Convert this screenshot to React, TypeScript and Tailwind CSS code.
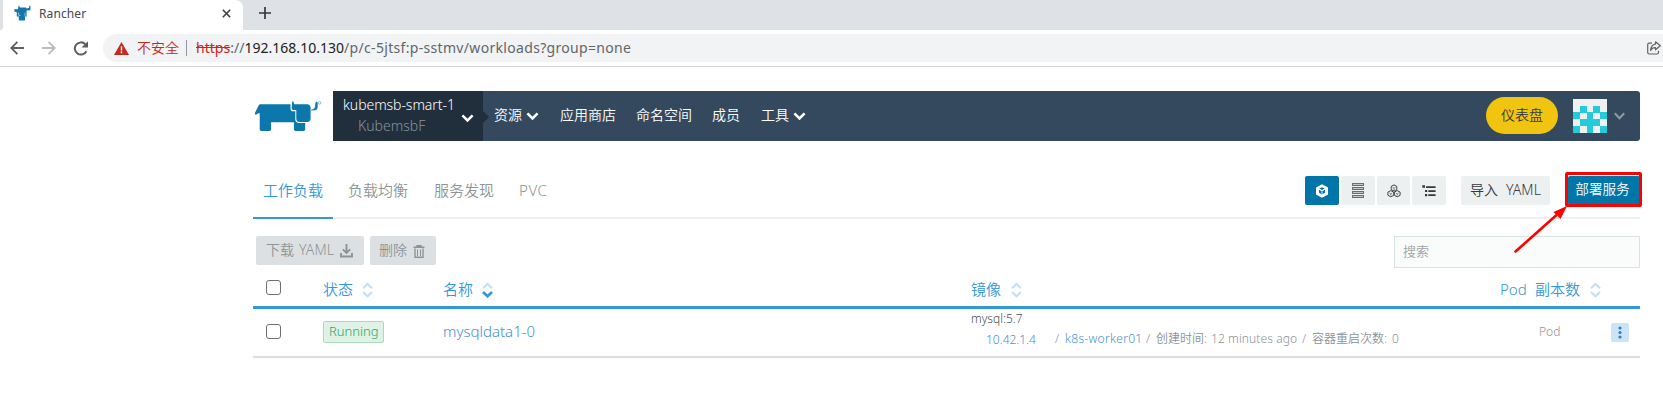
import React from "react";

function Chevron({ className = "" }: { className?: string }) {
  return (
    <svg className={`h-[9px] w-[13px] shrink-0 ${className}`} viewBox="0 0 13 9" fill="none" stroke="currentColor">
      <path d="M1.4 1.4 6.5 6.5 11.6 1.4" strokeWidth="2.5" />
    </svg>
  );
}

function SortIcon({ active = false }: { active?: boolean }) {
  return (
    <svg className="mt-px h-[16px] w-[11px] shrink-0" viewBox="0 0 11 16" fill="none" strokeWidth="2.1">
      <path d="M1 6.3 5.5 2 10 6.3" stroke="#c3e0f5" />
      <path d="M1 10 5.5 14.3 10 10" stroke={active ? "#3497da" : "#c3e0f5"} strokeWidth={active ? 2.6 : 2.1} />
    </svg>
  );
}

function BullLogo() {
  return (
    <svg className="h-[32px] w-[68px] shrink-0" viewBox="0 0 68 32">
      <g fill="#0b77aa">
        <path d="M6.2 4.2H36.5V8.4Q36.6 11.2 38.6 11.2H41.3V19.6Q41.5 22.8 44.7 23H51.2V29.6Q51 31 49.6 31H41.5Q40 31 39.9 29.6V22.3H17V29.6Q16.9 31 15.5 31H7.2Q5.8 31 5.7 29.6V13.3H4.3L1.9 14.8Q.4 14.6 1 12.8L4.8 5.2Q5.4 4.2 6.2 4.2Z" />
        <path d="M38.2 1.6Q39.4.8 39.6 2.2L40.2 4.2H53.2Q56.4 4.4 56.6 7.5V19Q56.2 21.8 53.2 21.9H45.2Q42.6 21.8 42.3 19.2V10H39.2Q37.6 9.8 37.7 8.2Z" />
        <path d="M57.4 9.9Q61 9.9 61.3 6.8L61.8 2.4Q62.6 1.5 63.3 2.4V7.4Q63 10 60.8 10.1H57.4Z" stroke="#0b77aa" strokeWidth=".6" />
      </g>
      <circle cx="65.6" cy="2.9" r="1.3" fill="none" stroke="#6eaecd" strokeWidth=".8" />
    </svg>
  );
}

function Favicon() {
  return (
    <svg className="h-[17px] w-[17px] shrink-0" viewBox="0 0 17 17" fill="#1277aa">
      <path d="M.2 4.2H4L4.6.3 6 2.5H11.8L12.5 3.6 14.8 3.1 15.6.4 16.4.6V5.2L12.6 5.6V11.4H11V15.4H4.8V11.4H2.8V7.3L.6 6.7Z" />
      <path d="M4.6 7.3V10.4H6.6M11 7.6V11.4" fill="none" stroke="#fff" strokeWidth=".5" />
    </svg>
  );
}

function BrowserTabs() {
  return (
    <div className="flex h-[30px] bg-[#dee1e6]">
      <div className="flex w-[3px] bg-white">
        <div className="w-[3px] rounded-br-lg bg-[#dee1e6]" />
      </div>
      <div className="flex w-[240px] items-start rounded-tr-lg bg-white pl-[11px]">
        <div className="flex h-[26px] w-[25px] items-center pt-px">
          <Favicon />
        </div>
        <span className="h-[26px] w-[183px] font-[Noto_Sans] text-[12px] leading-[27px] tracking-[0.1px] text-[#45484c]">Rancher</span>
        <svg className="mt-[9px] h-[9px] w-[9px]" viewBox="0 0 9 9" stroke="#3c4043" strokeWidth="1.6">
          <path d="M.8.8 8.2 8.2M8.2.8.8 8.2" />
        </svg>
      </div>
      <svg className="ml-[16px] mt-[7px] h-[12px] w-[12px]" viewBox="0 0 12 12" stroke="#35383b" strokeWidth="1.7">
        <path d="M6 0V12M0 6H12" />
      </svg>
    </div>
  );
}

function AddressBar() {
  return (
    <div className="flex h-[37px] items-start border-b border-[#d3d5d8] bg-white pt-[4px]">
      <div className="flex h-[28px] w-[103px] items-center pl-[10px]">
        <svg className="h-[14px] w-[14px]" viewBox="0 0 14 14" fill="none" stroke="#5a5e63" strokeWidth="1.8">
          <path d="M14 7H1.6M7.4.9 1.3 7 7.4 13.1" />
        </svg>
        <svg className="ml-[18px] h-[14px] w-[14px]" viewBox="0 0 14 14" fill="none" stroke="#b9bbbe" strokeWidth="1.8">
          <path d="M0 7H12.4M6.6.9 12.7 7 6.6 13.1" />
        </svg>
        <svg className="ml-[17px] h-[15px] w-[16px]" viewBox="0 0 16 15" fill="none" stroke="#5a5e63" strokeWidth="2">
          <path d="M13.4 10.2A6.1 6.1 0 1 1 12.3 3.2" />
          <path d="M15 .2V6.6H8.6Z" fill="#5a5e63" stroke="none" />
        </svg>
      </div>
      <div className="flex h-[28px] flex-1 items-center rounded-l-full bg-[#f1f3f4] pl-[11px] font-[Noto_Sans,'Noto_Sans_CJK_SC',sans-serif] text-[14px]">
        <svg className="h-[13px] w-[15px]" viewBox="0 0 15 13">
          <path d="M7.5 0 15 13H0Z" fill="#c5281c" />
          <path d="M7.5 4.2V8.4M7.5 9.6V11.2" stroke="#fff" strokeWidth="1.5" />
        </svg>
        <span className="-mt-[2px] ml-[8px] w-[48px] whitespace-nowrap font-[350] text-[#c5281c]">不安全</span>
        <span className="ml-px h-[16px] w-px bg-[#94979b]" />
        <span className="-mt-[2px] ml-[9px] whitespace-nowrap tracking-[0.32px] text-[#62666b]">
          <span className="tracking-[0.02px]">
            <span className="text-[#c5281c] line-through">https</span>://<span className="text-[#202124]">192.168.10.130</span>
          </span>
          /p/c-5jtsf:p-sstmv/workloads?group=none
        </span>
        <svg className="ml-auto mr-[2px] h-[14px] w-[14px]" viewBox="0 0 14 14" fill="none" stroke="#5f6368" strokeWidth="1.2">
          <path d="M5 2.2H2.2Q.7 2.2.7 3.7V11.5Q.7 13 2.2 13H10Q11.5 13 11.5 11.5V9.8" />
          <path d="M8.5.8 13.3 4.8 8.5 8.8V6.6Q5.2 6.4 3.6 9.4 4 3.8 8.5 3.1Z" strokeLinejoin="round" />
        </svg>
      </div>
    </div>
  );
}

function Avatar() {
  return (
    <svg className="h-[34px] w-[34px] shrink-0 bg-[#f0f0f0]" viewBox="0 0 34 34" fill="#26cbd9" shapeRendering="crispEdges">
      <path d="M7 7H14V14H7ZM20 7H27V14H20ZM0 13H7V20H0ZM14 13H20V20H14ZM27 13H34V20H27ZM7 20H27V27H7ZM0 27H7V34H0ZM14 27H20V34H14ZM27 27H34V34H27Z" />
    </svg>
  );
}

function NavBar() {
  return (
    <header className="flex h-[50px] w-[1387px]">
      <div className="flex w-[80px] items-start pl-px pt-[9px]">
        <BullLogo />
      </div>
      <nav className="flex w-[1307px] rounded-r-[3px] bg-[#34495e] text-[14px] text-white">
        <div className="flex h-[50px] w-[150px] items-center bg-[#212f3d]">
          <div className="flex w-[128px] flex-col pl-[10px]">
            <span className="-mt-[2px] h-[21px] whitespace-nowrap leading-[21px] tracking-[-0.06px]">kubemsb-smart-1</span>
            <span className="h-[21px] pl-[15px] leading-[21px] text-[#8a939b]">KubemsbF</span>
          </div>
          <Chevron className="mt-[4px]" />
        </div>
        <svg className="mt-[20px] h-[12px] w-[6px]" viewBox="0 0 6 12" fill="#212f3d">
          <path d="M0 0 6 6 0 12Z" />
        </svg>
        <div className="flex h-[46px] flex-1 items-center whitespace-nowrap">
          <span className="w-[32px] pl-[5px]">资源</span>
          <Chevron className="ml-[5px] mt-[4px]" />
          <span className="ml-[21px] w-[76px]">应用商店</span>
          <span className="w-[76px]">命名空间</span>
          <span className="w-[49px]">成员</span>
          <span className="w-[32px]">工具</span>
          <Chevron className="mt-[4px]" />
          <button className="ml-auto mt-[3px] h-[37px] w-[72px] rounded-[19px] bg-[#f1c40f] pb-[3px] text-[#34393e]">仪表盘</button>
          <span className="ml-[15px] mt-[4px]">
            <Avatar />
          </span>
          <svg className="ml-[7px] mr-[15px] mt-[3px] h-[8px] w-[11px]" viewBox="0 0 11 8" fill="none" stroke="#8f9ba6" strokeWidth="2">
            <path d="M.8 1.2 5.5 6.2 10.2 1.2" />
          </svg>
        </div>
      </nav>
    </header>
  );
}

const iconButton = "flex h-[29px] items-center justify-center rounded-[2px] bg-[#ecf0f1]";

function Tabs() {
  return (
    <div className="mt-[27px] flex h-[51px] w-[1387px] border-b-2 border-[#ecf0f1] text-[15px]">
      <div className="h-[51px] w-[80px] whitespace-nowrap border-b-2 border-[#3497da] pl-[10px] pt-[11px] leading-[22px] text-[#3497da]">工作负载</div>
      <div className="w-[86px] pl-[15px] pt-[11px] leading-[22px] text-[#8b9596]">负载均衡</div>
      <div className="w-[86px] pl-[15px] pt-[11px] leading-[22px] text-[#8b9596]">服务发现</div>
      <div className="pl-[14px] pt-[11px] leading-[22px] tracking-[0.6px] text-[#8b9596]">PVC</div>
      <div className="ml-auto mt-[8px] flex h-[29px] text-[14px] text-[#34393e]">
        <div className={`${iconButton} w-[34px] bg-[#0075a8]!`}>
          <svg className="mt-px h-[14px] w-[14px]" viewBox="0 0 14 14">
            <path d="M7 .2 13 3.6V10.4L7 13.8 1 10.4V3.6Z" fill="#fff" />
            <path d="M4 5.4 7 6.9 10 5.4V8.7L7 10.4 4 8.7Z" fill="#0075a8" />
            <path d="M4.2 4.6 7 3.2 9.8 4.6 7 6Z" fill="#0075a8" />
            <path d="M4 5.2 7 6.8 10 5.2M7 6.8V10.6" fill="none" stroke="#fff" strokeWidth=".9" />
          </svg>
        </div>
        <div className={`${iconButton} ml-[2px] w-[34px]`}>
          <svg className="h-[15px] w-[12px]" viewBox="0 0 12 15" shapeRendering="crispEdges">
            <path d="M0 0H12V3H0ZM0 4H12V7H0ZM0 8H12V11H0ZM0 12H12V15H0Z" fill="#6b6d6f" />
            <path d="M1 1H11V2H1ZM1 5H11V6H1ZM1 9H11V10H1ZM1 13H11V14H1Z" fill="#c2c5c6" />
          </svg>
        </div>
        <div className={`${iconButton} ml-[2px] w-[33px]`}>
          <svg className="h-[14px] w-[14px]" viewBox="0 0 14 14" fill="none" stroke="#414548" strokeWidth="1">
            <path d="M7 .9 9.8 2.4V5.6L7 7.1 4.2 5.6V2.4ZM3.8 6.6 6.7 8.1V11.3L3.8 12.8.9 11.3V8.1ZM10.2 6.6 13.1 8.1V11.3L10.2 12.8 7.3 11.3V8.1Z" />
            <path d="M5.5 3.3 7 4.2 8.5 3.3M7 4.2V6M2.3 9 3.8 9.9 5.3 9M3.8 9.9V11.6M8.7 9 10.2 9.9 11.7 9M10.2 9.9V11.6" strokeWidth=".6" />
          </svg>
        </div>
        <div className={`${iconButton} ml-[2px] w-[34px]`}>
          <svg className="h-[12px] w-[14px]" viewBox="0 0 14 12" fill="#35393c">
            <path d="M.3.3H3V2.7H.3ZM4 1.2H13.6V3H4ZM3 5H5.2V7H3ZM6.3 5.2H13.6V6.9H6.3ZM3 9.1H5.2V11.2H3ZM6.3 9.3H13.6V11H6.3Z" />
          </svg>
        </div>
        <button className={`${iconButton} ml-[15px] w-[89px] gap-[8px] whitespace-nowrap pb-[2px]`}>
          <span>导入</span>
          <span className="tracking-[0.15px]">YAML</span>
        </button>
        <div className="relative ml-[18px] h-[29px] w-[72px]">
          <button className="h-[29px] w-[72px] whitespace-nowrap rounded-[2px] bg-[#0075a8] pb-[2px] pr-[3px] text-[13.6px] text-white">部署服务</button>
          <div className="absolute -left-[3px] -top-[4px] h-[35px] w-[77px] rounded-[2px] border-[3px] border-[#ff0000]" />
          <svg className="absolute -left-[54px] top-[29px] h-[50px] w-[56px]" viewBox="0 0 56 50">
            <path d="M1.5 46.5 42 10.5" stroke="#ff0000" strokeWidth="2.6" strokeLinecap="round" />
            <path d="M53 1 46.5 14 43 10.5 39.5 7Z" fill="#ff0000" />
          </svg>
        </div>
      </div>
    </div>
  );
}

function ActionRow() {
  return (
    <div className="mt-[16px] flex h-[33px] w-[1387px] pl-[3px] text-[14px] text-[#8b9596]">
      <div className="mt-px flex h-[29px] w-[108px] items-center whitespace-nowrap rounded-[2px] bg-[#dce0e3] pb-[2px] pl-[10px]">
        <span className="w-[33px]">下载</span>
        <span className="w-[41px] tracking-[0.15px]">YAML</span>
        <svg className="mt-[3px] h-[14px] w-[13px]" viewBox="0 0 13 14" fill="none" stroke="#8b9596" strokeWidth="1.9">
          <path d="M6.5 0V8.5M2.8 5.4 6.5 9 10.2 5.4M1 9V12.5H12V9" />
        </svg>
      </div>
      <div className="ml-[6px] mt-px flex h-[29px] w-[66px] items-center whitespace-nowrap rounded-[2px] bg-[#dce0e3] pb-[2px] pl-[9px]">
        <span className="w-[34px]">删除</span>
        <svg className="mt-[3px] h-[13px] w-[12px]" viewBox="0 0 12 13" fill="none" stroke="#8b9596">
          <path d="M.5 2.3H11.5M4 2V.7H8V2M2 3.5V12.2H10V3.5" strokeWidth="1.4" />
          <path d="M4.5 4.5V11M7.5 4.5V11" strokeWidth="1" />
        </svg>
      </div>
      <div className="ml-auto mt-px h-[32px] w-[246px] border border-[#dbe2e2] bg-[#fafcfc] pl-[8px] text-[13px] leading-[28px] text-[#a1a5a6]">搜索</div>
    </div>
  );
}

function Box() {
  return <div className="h-[15px] w-[15px] rounded-[3px] border border-[#6f6f6f] bg-white" />;
}

function WorkloadTable() {
  return (
    <div className="w-[1387px]">
      <div className="flex h-[41px] border-b-3 border-[#3497da] text-[15px] text-[#3497da]">
        <div className="w-[70px] pl-[13px] pt-[12px]">
          <Box />
        </div>
        <div className="flex w-[120px] items-center pt-[4px]">
          <span className="w-[39px]">状态</span>
          <SortIcon />
        </div>
        <div className="flex w-[528px] items-center pt-[4px]">
          <span className="w-[39px]">名称</span>
          <SortIcon active />
        </div>
        <div className="flex flex-1 items-center pt-[4px]">
          <span className="w-[40px]">镜像</span>
          <SortIcon />
        </div>
        <div className="flex w-[140px] items-center whitespace-nowrap pt-[4px]">
          <span className="w-[35px]">Pod</span>
          <span className="w-[55px]">副本数</span>
          <SortIcon />
        </div>
      </div>
      <div className="flex h-[49px] border-b-2 border-[#dcddde]">
        <div className="w-[70px] pl-[13px] pt-[15px]">
          <Box />
        </div>
        <div className="w-[120px] pt-[12px]">
          <div className="h-[22px] w-[61px] rounded-[2px] border border-[#a9dcbe] bg-[#def2e6] pl-[5px] text-[13px] leading-[19px] text-[#36a266]">Running</div>
        </div>
        <div className="w-[528px] pt-[11px] text-[15px] leading-[22px] text-[#4790d2]">mysqldata1-0</div>
        <div className="flex-1 whitespace-nowrap text-[12px] text-[#8b9298]">
          <div className="h-[20px] pt-px leading-[18px] text-[#4b4f52]">mysql:5.7</div>
          <div className="flex h-[20px] leading-[20px]">
            <span className="w-[84px] pl-[15px] pt-px text-[#4790d2]">10.42.1.4</span>
            <span className="w-[10px]">/</span>
            <span className="w-[81px] tracking-[0.3px] text-[#4790d2]">k8s-worker01</span>
            <span className="w-[10px]">/</span>
            <span className="w-[55px]">创建时间:</span>
            <span className="w-[91px] tracking-[0.1px]">12 minutes ago</span>
            <span className="w-[10px]">/</span>
            <span className="w-[80px]">容器重启次数:</span>
            <span>0</span>
          </div>
        </div>
        <div className="flex w-[140px]">
          <span className="w-[111px] pl-[39px] pt-[14px] text-[12px] leading-[18px] text-[#8b9596]">Pod</span>
          <div className="mt-[14px] flex h-[19px] w-[18px] items-center justify-center rounded-[2px] bg-[#cbe4f6]">
            <svg className="h-[13px] w-[4px]" viewBox="0 0 4 13" fill="#2f7fc4">
              <circle cx="2" cy="2" r="1.6" />
              <circle cx="2" cy="6.5" r="1.6" />
              <circle cx="2" cy="11" r="1.6" />
            </svg>
          </div>
        </div>
      </div>
    </div>
  );
}

export default function App() {
  return (
    <div className="h-[417px] w-[1663px] overflow-hidden bg-white font-[Noto_Sans,'Noto_Sans_CJK_SC',sans-serif]">
      <BrowserTabs />
      <AddressBar />
      <main className="pl-[253px] pt-[24px] font-[350]">
        <NavBar />
        <Tabs />
        <ActionRow />
        <WorkloadTable />
      </main>
    </div>
  );
}
